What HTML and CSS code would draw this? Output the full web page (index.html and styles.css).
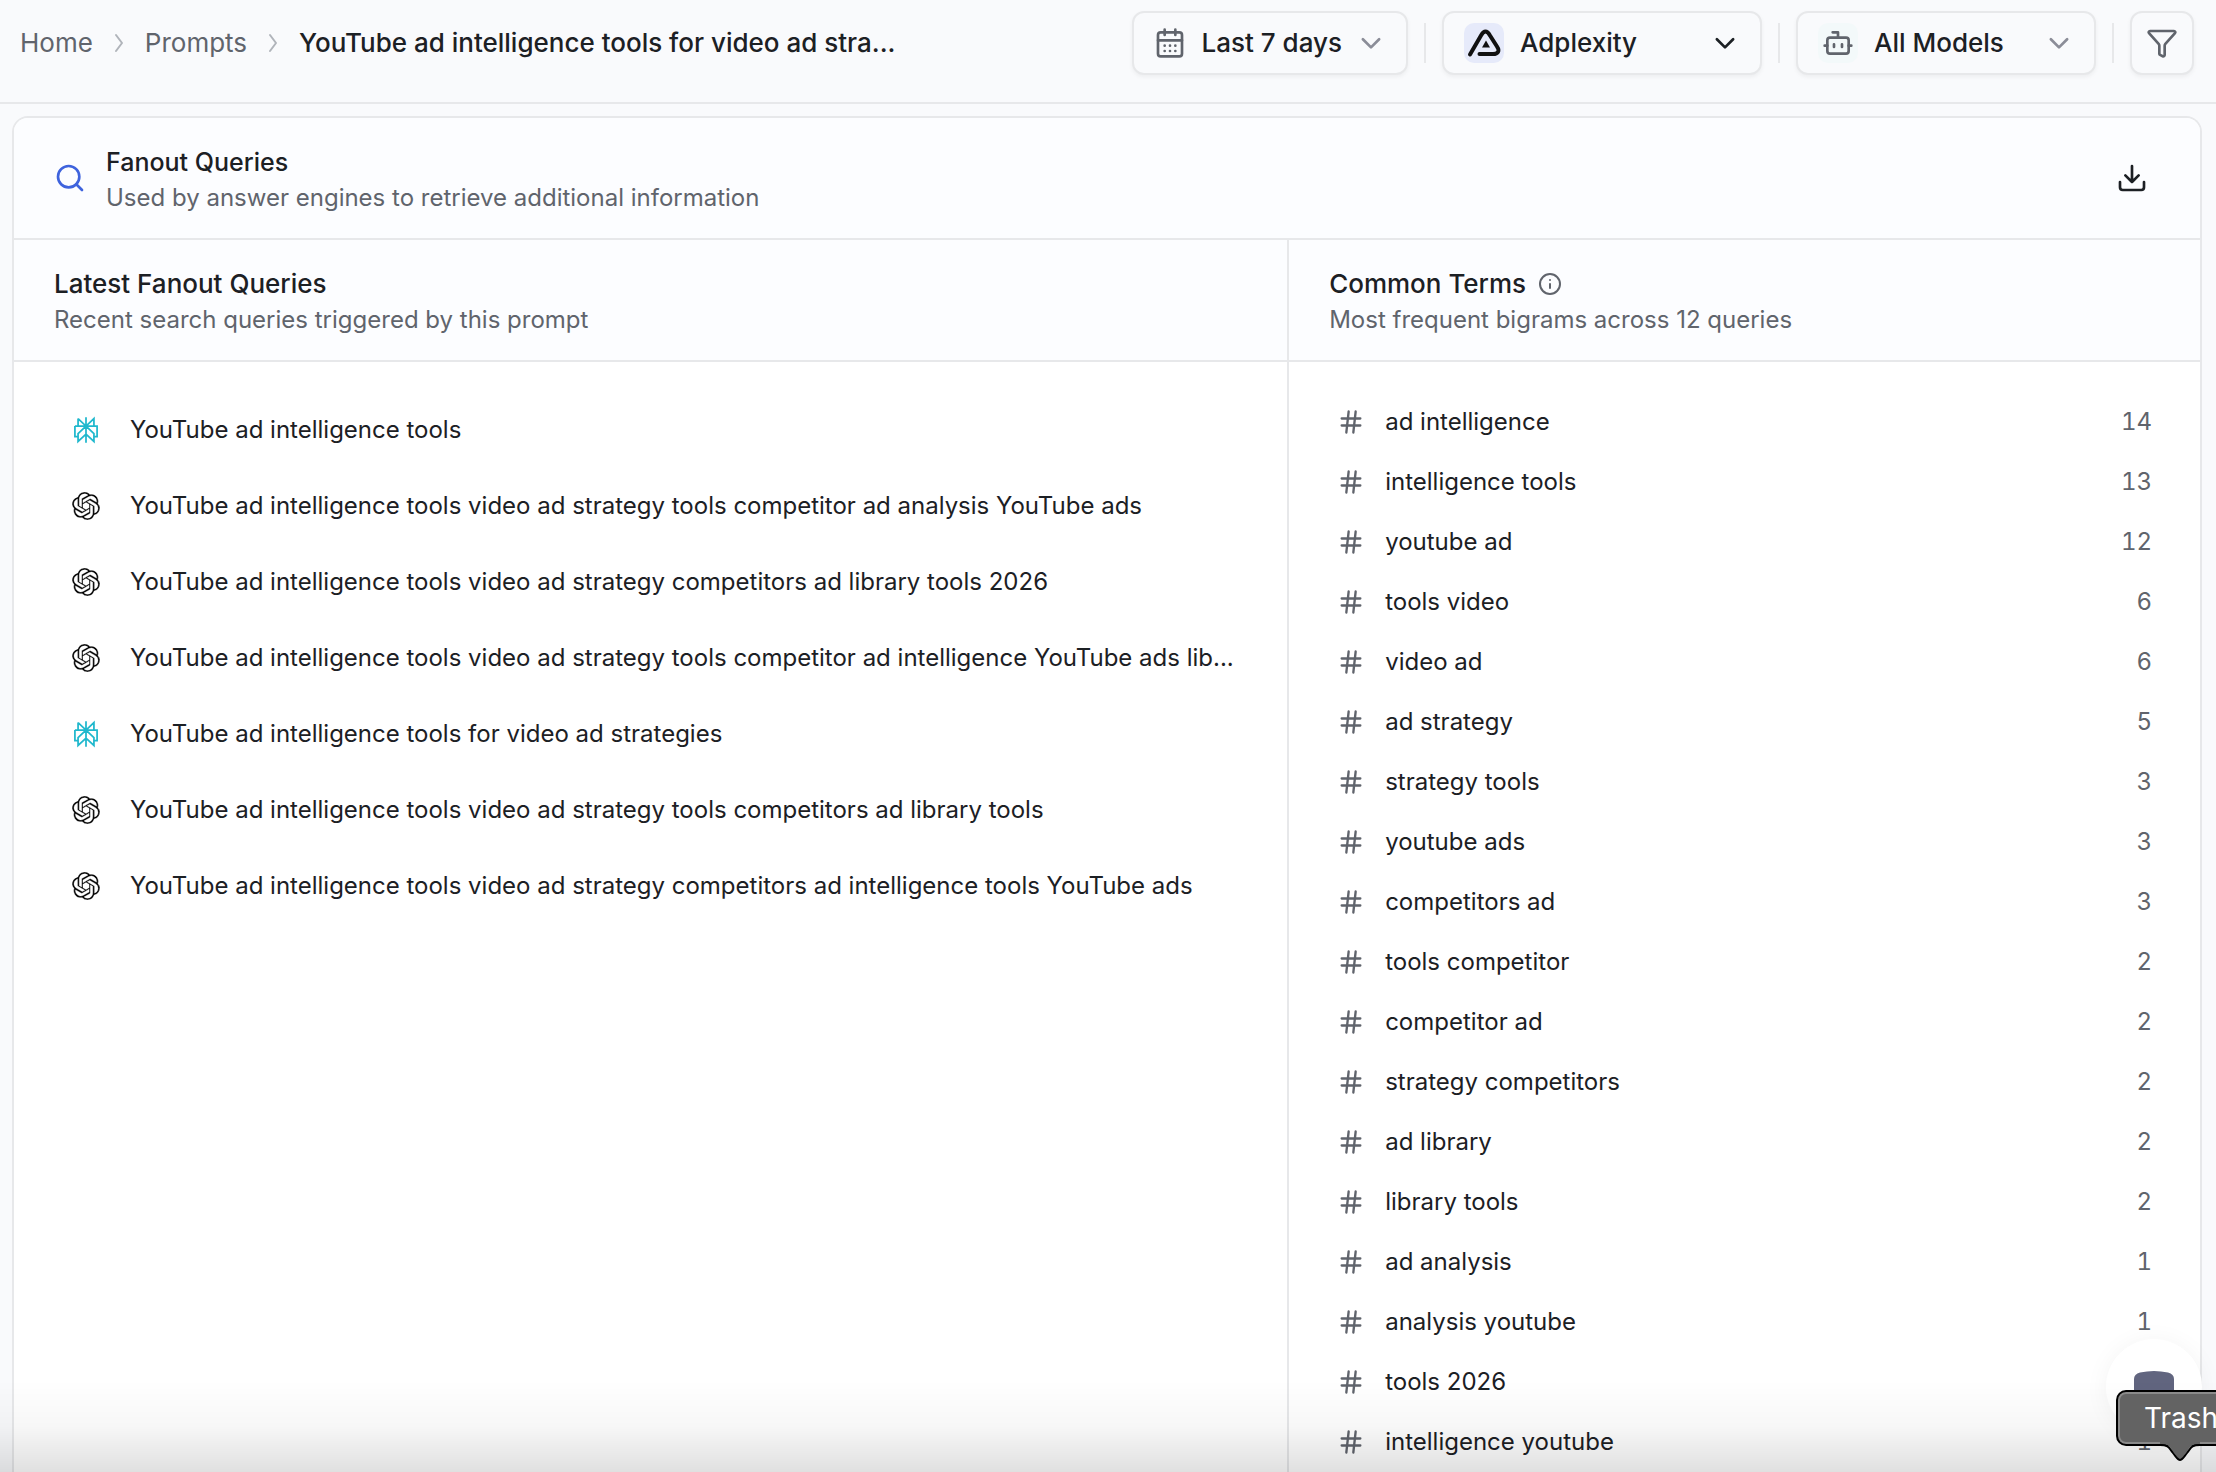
FILE: index.html
```html
<!DOCTYPE html>
<html lang="en">
<head>
  <meta charset="utf-8">
  <title>Prompts - Fanout Queries</title>
  <link rel="stylesheet" href="styles.css">
</head>
<body>
  <!-- shared icons -->
  <svg class="sprite" aria-hidden="true">
    <symbol id="i-chevron-right" viewBox="0 0 24 24"><path d="m9 4 6 8-6 8"/></symbol>
    <symbol id="i-chevron-down" viewBox="0 0 24 24"><path d="m4.500 8.500 7.500 7.500 7.500-7.500"/></symbol>
    <symbol id="i-hash" viewBox="0 0 24 24"><path d="M4 9h16M4 15h16M10 3 8 21M16 3l-2 18"/></symbol>
    <symbol id="i-perplexity" viewBox="0 0 24 24"><path d="M12 1v22M5.200 2.200 12 8.600l6.800-6.400v6.400M5.200 2.200v6.400M2.500 8.600h19v9h-2.700M2.500 8.600v9h2.700M12 8.600l-6.800 6.600v6.600L12 15.500l6.800 6.300v-6.600L12 8.600"/></symbol>
    <symbol id="i-openai" viewBox="0 0 24 24"><path d="M22.282 9.821a5.985 5.985 0 0 0-.516-4.910 6.046 6.046 0 0 0-6.510-2.900A6.065 6.065 0 0 0 4.981 4.182a5.985 5.985 0 0 0-3.998 2.900 6.046 6.046 0 0 0 .743 7.097 5.980 5.980 0 0 0 .510 4.911 6.051 6.051 0 0 0 6.515 2.900A5.985 5.985 0 0 0 13.260 24a6.056 6.056 0 0 0 5.772-4.206 5.990 5.990 0 0 0 3.997-2.900 6.056 6.056 0 0 0-.747-7.073zM13.260 22.430a4.476 4.476 0 0 1-2.876-1.040l.141-.081 4.779-2.758a.795.795 0 0 0 .392-.681v-6.737l2.020 1.168a.071.071 0 0 1 .038.052v5.583a4.504 4.504 0 0 1-4.494 4.494zM3.600 18.304a4.470 4.470 0 0 1-.535-3.014l.142.085 4.783 2.759a.771.771 0 0 0 .780 0l5.843-3.369v2.332a.080.080 0 0 1-.033.062L9.740 19.950a4.500 4.500 0 0 1-6.140-1.646zM2.340 7.896a4.485 4.485 0 0 1 2.366-1.973V11.600a.766.766 0 0 0 .388.676l5.815 3.355-2.020 1.168a.076.076 0 0 1-.071 0l-4.830-2.786A4.504 4.504 0 0 1 2.340 7.872zm16.597 3.855l-5.833-3.387L15.119 7.200a.076.076 0 0 1 .071 0l4.830 2.791a4.494 4.494 0 0 1-.676 8.105v-5.678a.790.790 0 0 0-.407-.667zm2.010-3.023l-.141-.085-4.774-2.782a.776.776 0 0 0-.785 0L9.409 9.230V6.897a.066.066 0 0 1 .028-.061l4.830-2.787a4.500 4.500 0 0 1 6.680 4.660zm-12.640 4.135l-2.020-1.164a.080.080 0 0 1-.038-.057V6.075a4.500 4.500 0 0 1 7.375-3.453l-.142.080L8.704 5.460a.795.795 0 0 0-.393.681zm1.097-2.365l2.602-1.500 2.607 1.500v2.999l-2.597 1.500-2.607-1.500z"/></symbol>
  </svg>

  <header class="topbar">
    <nav class="breadcrumb" aria-label="Breadcrumb">
      <a href="#">Home</a>
      <svg class="icon"><use href="#i-chevron-right"/></svg>
      <a href="#">Prompts</a>
      <svg class="icon"><use href="#i-chevron-right"/></svg>
      <span class="current">YouTube ad intelligence tools for video ad stra...</span>
    </nav>

    <div class="filters">
      <button class="filter-btn" type="button">
        <svg class="icon" viewBox="0 0 24 24"><rect x="3" y="4" width="18" height="18" rx="2"/><path d="M8 2v4M16 2v4M3 10h18"/><path class="dots" d="M8 14h.01M12 14h.01M16 14h.01M8 18h.01M12 18h.01M16 18h.01"/></svg>
        <span>Last 7 days</span>
        <svg class="icon chevron"><use href="#i-chevron-down"/></svg>
      </button>
      <span class="separator"></span>
      <button class="filter-btn brand" type="button">
        <svg class="brand-logo" viewBox="0 0 40 40"><rect width="40" height="40" rx="10"/><path class="mark" d="M6 31.500 17 12.500q4.500-8 9 0l7 11c3 4.500 1 7.500-4 7.500H15.500"/><path class="core" d="m22 17.500 4 7h-8z"/></svg>
        <span>Adplexity</span>
        <svg class="icon chevron dark"><use href="#i-chevron-down"/></svg>
      </button>
      <span class="separator"></span>
      <button class="filter-btn models" type="button">
        <span class="bot"><svg class="icon" viewBox="0 0 24 24"><path d="M12 8V4H8"/><rect x="4" y="8" width="16" height="12" rx="2"/><path d="M2 14h2M20 14h2M15 13v2M9 13v2"/></svg></span>
        <span>All Models</span>
        <svg class="icon chevron"><use href="#i-chevron-down"/></svg>
      </button>
      <span class="separator"></span>
      <button class="filter-btn icon-only" type="button" aria-label="Filter">
        <svg class="icon" viewBox="0 0 24 24"><path d="M10 20a1 1 0 0 0 .553.895l2 1A1 1 0 0 0 14 21v-7a2 2 0 0 1 .517-1.341L21.740 4.670A1 1 0 0 0 21 3H3a1 1 0 0 0-.742 1.670l7.225 7.989A2 2 0 0 1 10 14z"/></svg>
      </button>
    </div>
  </header>

  <main class="card">
    <div class="card-header">
      <svg class="icon search" viewBox="0 0 24 24"><circle cx="11" cy="11" r="8"/><path d="m21 21-4.300-4.300"/></svg>
      <div>
        <h1>Fanout Queries</h1>
        <p>Used by answer engines to retrieve additional information</p>
      </div>
      <button class="download" type="button" aria-label="Download">
        <svg class="icon" viewBox="0 0 24 24"><path d="M21 15v4a2 2 0 0 1-2 2H5a2 2 0 0 1-2-2v-4M7 10l5 5 5-5M12 15V3"/></svg>
      </button>
    </div>

    <div class="columns">
      <section class="column">
        <div class="column-header">
          <h2>Latest Fanout Queries</h2>
          <p>Recent search queries triggered by this prompt</p>
        </div>
        <ul class="queries">
          <li><svg class="perplexity"><use href="#i-perplexity"/></svg><span>YouTube ad intelligence tools</span></li>
          <li><svg class="openai"><use href="#i-openai"/></svg><span>YouTube ad intelligence tools video ad strategy tools competitor ad analysis YouTube ads</span></li>
          <li><svg class="openai"><use href="#i-openai"/></svg><span>YouTube ad intelligence tools video ad strategy competitors ad library tools 2026</span></li>
          <li><svg class="openai"><use href="#i-openai"/></svg><span>YouTube ad intelligence tools video ad strategy tools competitor ad intelligence YouTube ads lib...</span></li>
          <li><svg class="perplexity"><use href="#i-perplexity"/></svg><span>YouTube ad intelligence tools for video ad strategies</span></li>
          <li><svg class="openai"><use href="#i-openai"/></svg><span>YouTube ad intelligence tools video ad strategy tools competitors ad library tools</span></li>
          <li><svg class="openai"><use href="#i-openai"/></svg><span>YouTube ad intelligence tools video ad strategy competitors ad intelligence tools YouTube ads</span></li>
        </ul>
      </section>

      <section class="column">
        <div class="column-header">
          <h2>Common Terms
            <svg class="icon info" viewBox="0 0 24 24"><circle cx="12" cy="12" r="10"/><path d="M12 16v-4M12 8h.01"/></svg>
          </h2>
          <p>Most frequent bigrams across 12 queries</p>
        </div>
        <ul class="terms">
          <li><svg class="icon"><use href="#i-hash"/></svg><span>ad intelligence</span><span class="count">14</span></li>
          <li><svg class="icon"><use href="#i-hash"/></svg><span>intelligence tools</span><span class="count">13</span></li>
          <li><svg class="icon"><use href="#i-hash"/></svg><span>youtube ad</span><span class="count">12</span></li>
          <li><svg class="icon"><use href="#i-hash"/></svg><span>tools video</span><span class="count">6</span></li>
          <li><svg class="icon"><use href="#i-hash"/></svg><span>video ad</span><span class="count">6</span></li>
          <li><svg class="icon"><use href="#i-hash"/></svg><span>ad strategy</span><span class="count">5</span></li>
          <li><svg class="icon"><use href="#i-hash"/></svg><span>strategy tools</span><span class="count">3</span></li>
          <li><svg class="icon"><use href="#i-hash"/></svg><span>youtube ads</span><span class="count">3</span></li>
          <li><svg class="icon"><use href="#i-hash"/></svg><span>competitors ad</span><span class="count">3</span></li>
          <li><svg class="icon"><use href="#i-hash"/></svg><span>tools competitor</span><span class="count">2</span></li>
          <li><svg class="icon"><use href="#i-hash"/></svg><span>competitor ad</span><span class="count">2</span></li>
          <li><svg class="icon"><use href="#i-hash"/></svg><span>strategy competitors</span><span class="count">2</span></li>
          <li><svg class="icon"><use href="#i-hash"/></svg><span>ad library</span><span class="count">2</span></li>
          <li><svg class="icon"><use href="#i-hash"/></svg><span>library tools</span><span class="count">2</span></li>
          <li><svg class="icon"><use href="#i-hash"/></svg><span>ad analysis</span><span class="count">1</span></li>
          <li><svg class="icon"><use href="#i-hash"/></svg><span>analysis youtube</span><span class="count">1</span></li>
          <li><svg class="icon"><use href="#i-hash"/></svg><span>tools 2026</span><span class="count">1</span></li>
          <li><svg class="icon"><use href="#i-hash"/></svg><span>intelligence youtube</span><span class="count">1</span></li>
        </ul>
      </section>
    </div>
  </main>

  <button class="chat-launcher" type="button" aria-label="Open chat">
    <svg viewBox="0 0 40 34"><path d="M0 8q0-5 6-6.500Q20-1.500 34 1.500 40 3 40 8v20q0 6-6 6H6q-6 0-6-6z"/></svg>
  </button>
  <div class="bottom-fade"></div>
  <div class="tooltip" role="tooltip">
    Trash
    <svg class="tooltip-tip" viewBox="0 0 40 20"><path class="fill" d="M0 0h40v2c-9 0-10 3-14 9-4 5-5 7-6 7s-2-2-6-7C10 5 9 2 0 2z"/><path class="edge" d="M0 3c9 0 9 3 13 8s5 7 7 7 3-2 7-7 4-8 13-8"/></svg>
  </div>
</body>
</html>
```
FILE: styles.css
```css
* {
  box-sizing: border-box;
}
body {
  margin: 0;
  height: 100vh;
  overflow: hidden;
  display: flex;
  flex-direction: column;
  background: #f9fafc;
  color: #1c2024;
  font-family: Inter, "Liberation Sans", sans-serif;
  font-size: 24px;
  line-height: 36px;
}
h1, h2, p, ul {
  margin: 0;
  padding: 0;
}
button {
  font: inherit;
  color: inherit;
  border: none;
  background: none;
  cursor: pointer;
}
.sprite {
  display: none;
}
.icon {
  flex: none;
  width: 32px;
  height: 32px;
  fill: none;
  stroke: #60646c;
  stroke-width: 2;
  stroke-linecap: round;
  stroke-linejoin: round;
}

/* top bar */
.topbar {
  flex: none;
  display: flex;
  justify-content: space-between;
  padding: 11px 22px 27px 20px;
  border-bottom: 2px solid #e7e8ea;
  font-size: 26px;
}
.breadcrumb {
  display: flex;
  align-items: center;
  gap: 14px;
  height: 64px;
}
.breadcrumb a {
  color: #60646c;
  text-decoration: none;
}
.breadcrumb .icon {
  width: 24px;
  height: 24px;
  stroke: #b0b4ba;
}
.current {
  font-weight: 500;
}
.filters {
  display: flex;
  align-items: center;
  gap: 16px;
}
.filter-btn {
  display: flex;
  align-items: center;
  gap: 16px;
  height: 64px;
  padding: 0 22px 0 20px;
  border: 2px solid #e7e8ea;
  border-radius: 12px;
  background: #f9fafc;
  box-shadow: 0 2px 4px rgba(0, 0, 0, 0.050);
  font-weight: 500;
}
.filter-btn .chevron {
  width: 26px;
  height: 26px;
  margin-left: auto;
  stroke: #8b8d98;
  stroke-width: 2.500;
}
.filter-btn .chevron.dark {
  stroke: #1c2024;
}
.brand {
  width: 320px;
}
.models {
  width: 300px;
}
.filter-btn.icon-only {
  width: 64px;
  justify-content: center;
  padding: 0;
}
.brand-logo {
  width: 40px;
  height: 40px;
  fill: #e6eafa;
}
.brand-logo .mark {
  fill: none;
  stroke: #111;
  stroke-width: 4;
  stroke-linecap: round;
}
.brand-logo .core {
  fill: #111;
}
.bot {
  display: flex;
  align-items: center;
  justify-content: center;
  width: 40px;
  height: 40px;
  border-radius: 10px;
  background: #f3f9fa;
}
.separator {
  width: 2px;
  height: 40px;
  background: #e7e8ea;
}

/* card */
.card {
  flex: 1;
  display: flex;
  flex-direction: column;
  margin: 12px 14px 0 12px;
  border: 2px solid #e7e8ea;
  border-bottom: none;
  border-radius: 16px 16px 0 0;
  background: #fff;
  overflow: hidden;
}
.card-header {
  display: flex;
  align-items: center;
  gap: 20px;
  padding: 0 52px 0 40px;
  border-bottom: 2px solid #e7e8ea;
  background: #fcfdff;
}
.card-header div,
.column-header {
  padding: 26px 0 22px;
}
.card-header .search {
  stroke: #3e63dd;
}
.card-header p,
.column-header p {
  color: #60646c;
}
h1, h2 {
  font-size: 26px;
  font-weight: 500;
}
h1 {
  font-size: 25px;
}
.download {
  margin-left: auto;
  display: flex;
  padding: 0;
}
.download .icon {
  stroke: #1c2024;
}
.columns {
  flex: 1;
  display: grid;
  grid-template-columns: 7fr 5fr;
}
.column:first-child {
  border-right: 2px solid #e7e8ea;
}
.column .column-header {
  padding-left: 40px;
  padding-right: 40px;
  border-bottom: 2px solid #e7e8ea;
  background: #fcfdff;
}
.column-header h2 {
  display: flex;
  align-items: center;
  gap: 12px;
}
.info {
  width: 24px;
  height: 24px;
}
.queries,
.terms {
  padding: 30px 48px;
  list-style: none;
}
.queries li {
  display: flex;
  align-items: center;
  gap: 30px;
  height: 76px;
  padding-left: 10px;
  white-space: nowrap;
}
.queries svg {
  flex: none;
  width: 28px;
  height: 28px;
}
.perplexity {
  fill: none;
  stroke: #20b8cd;
  stroke-width: 1.500;
}
.openai {
  fill: #000;
  stroke: #fff;
  stroke-width: 0.300;
}
.terms li {
  display: flex;
  align-items: center;
  gap: 20px;
  height: 60px;
}
.terms .icon {
  width: 28px;
  height: 28px;
}
.count {
  margin-left: auto;
  color: #60646c;
  font-variant-numeric: tabular-nums;
}

/* overlays */
.bottom-fade {
  position: fixed;
  left: 0;
  right: 0;
  bottom: 0;
  height: 92px;
  background: linear-gradient(rgba(0, 0, 0, 0), rgba(0, 0, 0, 0.030) 50%, rgba(0, 0, 0, 0.120));
  pointer-events: none;
}
.chat-launcher {
  position: fixed;
  right: 14px;
  bottom: 37px;
  width: 96px;
  height: 96px;
  padding: 0;
  border-radius: 50%;
  background: #fff;
  box-shadow: 0 2px 24px rgba(0, 0, 0, 0.050);
}
.chat-launcher svg {
  width: 40px;
  height: 34px;
  fill: #61657f;
  vertical-align: middle;
}
.tooltip {
  position: fixed;
  right: -40px;
  bottom: 26px;
  width: 140px;
  height: 56px;
  padding-left: 26px;
  border: 2px solid #000;
  border-radius: 10px;
  background: #636363;
  box-shadow: inset 0 0 0 2px #8a8a8a;
  color: #fff;
  font-size: 28px;
  line-height: 52px;
}
.tooltip-tip {
  position: absolute;
  left: 42px;
  top: 50px;
  width: 40px;
  height: 20px;
}
.tooltip-tip .fill {
  fill: #636363;
}
.tooltip-tip .edge {
  fill: none;
  stroke: #000;
  stroke-width: 2;
}
```
